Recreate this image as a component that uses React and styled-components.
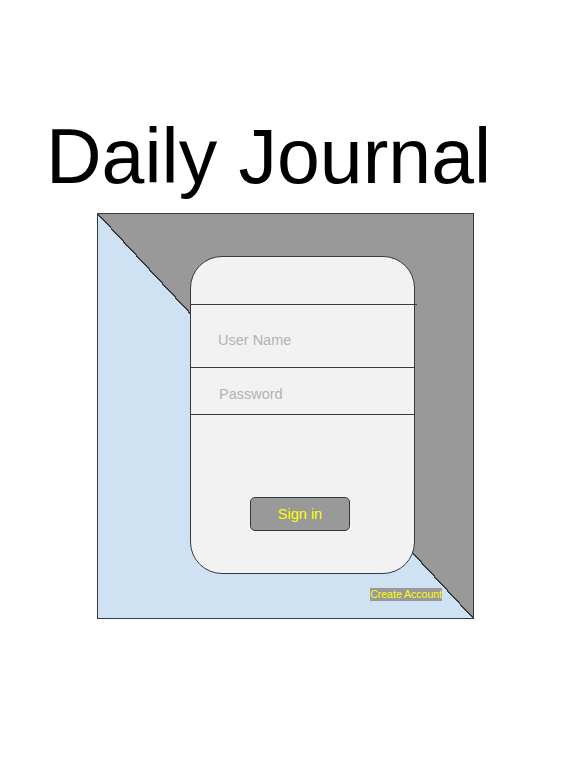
import React from 'react'
import styled, { createGlobalStyle } from 'styled-components'

const GlobalStyle = createGlobalStyle`
  html, body {
    margin: 0;
    padding: 0;
    background: #ffffff;
  }
  body {
    font-family: "Liberation Sans", Arial, sans-serif;
  }
`

const Page = styled.main`
  width: 561px;
  min-height: 763px;
  display: flex;
  flex-direction: column;
  padding-top: 118px;
  box-sizing: border-box;
`

const Title = styled.h1`
  margin: 0 0 18px 46px;
  font-size: 77px;
  line-height: 77px;
  font-weight: 400;
  color: #000;
`

const Frame = styled.section`
  margin-left: 97px;
  width: 377px;
  height: 406px;
  box-sizing: border-box;
  border: 1px solid #36393d;
  padding: 42px 31px 0 92px;
  display: flex;
  flex-direction: column;
  background: linear-gradient(
    to top right,
    #cfe2f3 calc(50% - 0.7px),
    #36393d calc(50% - 0.7px),
    #36393d calc(50% + 0.7px),
    #999999 calc(50% + 0.7px)
  );
`

const Card = styled.form`
  width: 225px;
  height: 318px;
  box-sizing: border-box;
  background: #f2f2f2;
  border: 1px solid #36393d;
  border-radius: 32px;
  display: flex;
  flex-direction: column;
`

const CardTop = styled.div`
  height: 47px;
`

const Field = styled.div`
  height: ${({ h }) => h}px;
  box-sizing: border-box;
  border-top: 1px solid #36393d;
  border-bottom: ${({ last }) => (last ? '1px solid #36393d' : 'none')};
  margin-right: ${({ over }) => (over ? -3 : 0)}px;
  padding: ${({ pad }) => pad}px 0 0 ${({ left }) => left}px;
  font-size: 14.5px;
  line-height: 16px;
  color: #b3b3b3;
`

const ButtonRow = styled.div`
  flex: 1;
  display: flex;
  justify-content: center;
  padding-top: 82px;
`

const SignIn = styled.button`
  width: 100px;
  height: 34px;
  margin-right: 5px;
  box-sizing: border-box;
  background: #999999;
  border: 1px solid #36393d;
  border-radius: 5px;
  color: #ffff00;
  font-family: "Liberation Sans", Arial, sans-serif;
  font-size: 14.5px;
  padding: 0;
`

const Footer = styled.div`
  display: flex;
  justify-content: flex-end;
  margin-top: 14px;
`

const CreateLink = styled.span`
  background: #999999;
  color: #ffff00;
  font-size: 10.5px;
  line-height: 13px;
`

export default function App() {
  return (
    <>
      <GlobalStyle />
      <Page>
        <Title>Daily Journal</Title>
        <Frame>
          <Card>
            <CardTop />
            <Field h={63} pad={27} left={27} over>User Name</Field>
            <Field h={48} pad={18} left={28} last>Password</Field>
            <ButtonRow>
              <SignIn type="button">Sign in</SignIn>
            </ButtonRow>
          </Card>
          <Footer>
            <CreateLink>Create Account</CreateLink>
          </Footer>
        </Frame>
      </Page>
    </>
  )
}
